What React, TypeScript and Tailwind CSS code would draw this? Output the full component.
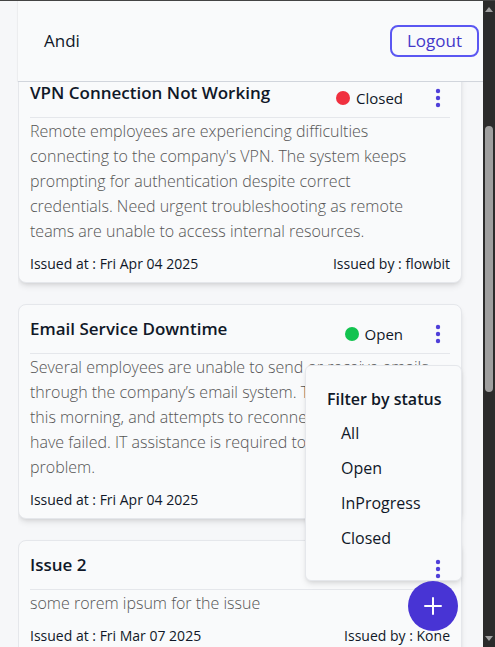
import React from "react";

type Issue = {
  title: string;
  status?: "Open" | "Closed" | "InProgress";
  description: string;
  issuedAt: string;
  issuedBy: string;
};

const issues: Issue[] = [
  {
    title: "VPN Connection Not Working",
    status: "Closed",
    description:
      "Remote employees are experiencing difficulties connecting to the company's VPN. The system keeps prompting for authentication despite correct\ncredentials. Need urgent troubleshooting as remote\nteams are unable to access internal resources.",
    issuedAt: "Fri Apr 04 2025",
    issuedBy: "flowbit",
  },
  {
    title: "Email Service Downtime",
    status: "Open",
    description:
      "Several employees are unable to send or receive emails through the company\u2019s email system. The issue started this morning, and attempts to reconnect to the server have failed. IT assistance is required to resolve the problem.",
    issuedAt: "Fri Apr 04 2025",
    issuedBy: "flowbit",
  },
  {
    title: "Issue 2",
    description: "some rorem ipsum for the issue",
    issuedAt: "Fri Mar 07 2025",
    issuedBy: "Kone",
  },
];

const Kebab = () => (
  <svg width="8" height="22" viewBox="0 0 8 22" className="text-[#4f3fd9]">
    <circle cx="4" cy="4" r="2.2" fill="currentColor" />
    <circle cx="4" cy="11" r="2.2" fill="currentColor" />
    <circle cx="4" cy="18" r="2.2" fill="currentColor" />
  </svg>
);

const FilterMenu = () => (
  <div className="absolute top-[60px] right-[-1px] z-10 w-[157px] h-[216px] rounded-md border border-gray-200 bg-gray-50 shadow-md pt-[21px] pl-[21px]">
    <div className="text-[16px] leading-6 font-semibold text-gray-900">Filter by status</div>
    <ul className="mt-[5px] pl-[14px] text-[16px] text-gray-900">
      {["All", "Open", "InProgress", "Closed"].map((s) => (
        <li key={s} className="leading-[35px]">
          {s}
        </li>
      ))}
    </ul>
  </div>
);

const IssueCard = ({ issue, menuOpen }: { issue: Issue; menuOpen?: boolean }) => (
  <div className="relative w-[444px] shrink-0 rounded-lg border border-gray-200 bg-gray-50 shadow-md px-[11px] pt-[12px] pb-[8px]">
    <div className="flex h-[37px] items-start justify-between border-b border-gray-200">
      <h2 className="text-[17px] leading-6 font-semibold text-gray-900">{issue.title}</h2>
      <div className="flex items-center mt-[5px]">
        {issue.status && (
          <div className="flex items-center gap-[6px] mr-[23px]">
            <span
              className={
                "w-[14px] h-[14px] rounded-full " +
                (issue.status === "Closed" ? "bg-[#f0303f]" : "bg-[#12c34f]")
              }
            />
            <span className="text-[15px] leading-6 font-medium text-gray-900">{issue.status}</span>
          </div>
        )}
        <div className="relative z-20 flex w-6 justify-center">
          <Kebab />
        </div>
      </div>
    </div>
    <p className="whitespace-pre-line pt-[1px] text-[16px] leading-[25px] font-light text-[#555]">
      {issue.description}
    </p>
    <div className="mt-[10px] flex justify-between text-[14px] leading-5 text-gray-900">
      <span>Issued at : {issue.issuedAt}</span>
      <span>Issued by : {issue.issuedBy}</span>
    </div>
    {menuOpen && <FilterMenu />}
  </div>
);

const Scrollbar = () => (
  <div className="flex w-[12px] shrink-0 flex-col items-center bg-[#2b2b2b]">
    <div className="mt-[6px] h-0 w-0 border-x-[4px] border-b-[5px] border-x-transparent border-b-[#a0a0a0]" />
    <div className="mt-[114px] h-[266px] w-[8px] rounded-full bg-[#9f9f9f]" />
    <div className="flex-1" />
    <div className="mb-[6px] h-0 w-0 border-x-[4px] border-t-[5px] border-x-transparent border-t-[#a0a0a0]" />
  </div>
);

export default function App() {
  return (
    <div className="flex h-[647px] w-full overflow-hidden border-t border-[#444] bg-[#f6f7f9] font-['Open_Sans',sans-serif]">
      <div className="relative flex min-w-0 flex-1 flex-col pl-[18px]">
        <header className="flex h-[81px] shrink-0 items-center justify-between border-b border-gray-300 bg-gray-50 pl-[26px] pr-[4px] shadow-[-1px_0_1px_rgba(0,0,0,0.04)]">
          <span className="text-[17px] font-medium text-gray-900">Andi</span>
          <button className="h-[32px] w-[89px] rounded-lg border-2 border-[#5b57f2] text-[17px] font-medium text-[#4338ca]">
            Logout
          </button>
        </header>
        <main className="flex-1 overflow-hidden">
          <div className="-mt-[14px] flex flex-col gap-[21px]">
            {issues.map((issue, i) => (
              <IssueCard key={issue.title} issue={issue} menuOpen={i === 1} />
            ))}
          </div>
        </main>
        <button className="absolute right-[25px] bottom-[16px] z-30 flex h-[50px] w-[50px] items-center justify-center rounded-full bg-[#4834d4]">
          <svg width="20" height="20" viewBox="0 0 20 20" stroke="white" strokeWidth="2" strokeLinecap="round">
            <path d="M10 2v16M2 10h16" />
          </svg>
        </button>
      </div>
      <Scrollbar />
    </div>
  );
}
